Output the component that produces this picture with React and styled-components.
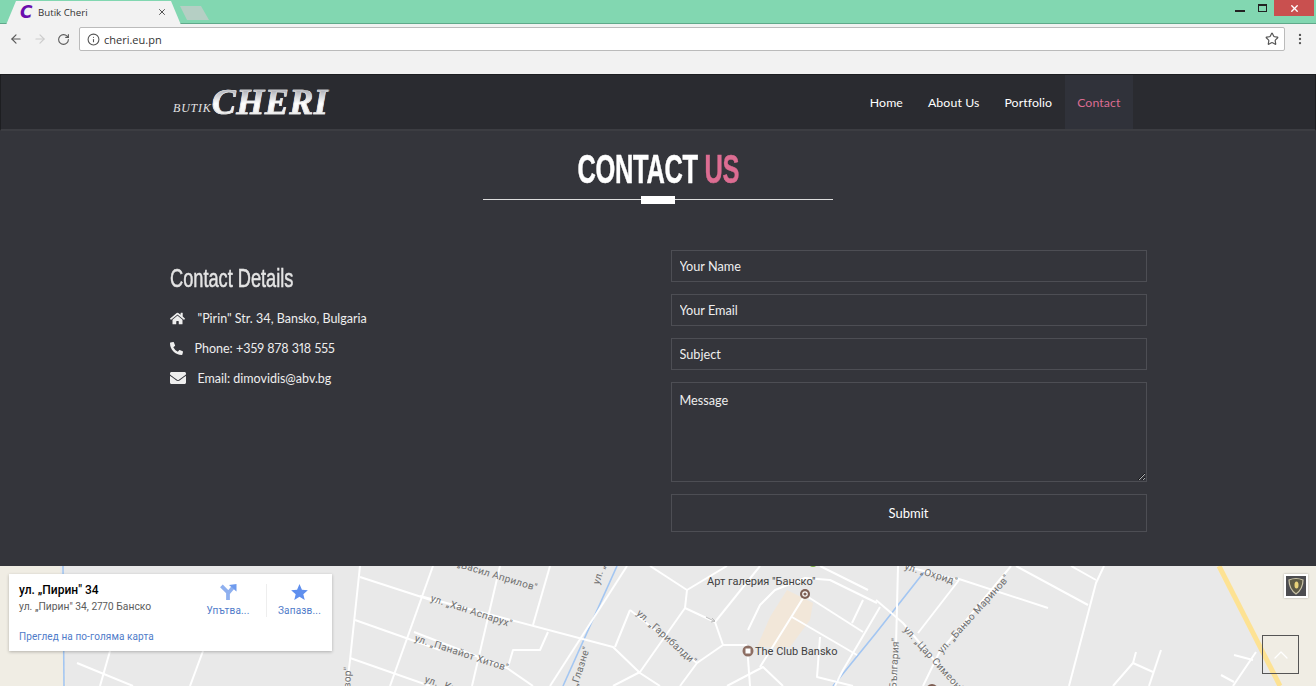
import React from "react";
import styled, { createGlobalStyle } from "styled-components";
import { ArrowLeft, ArrowRight, RotateCw, Info, Star, EllipsisVertical, X, ChevronUp } from "lucide-react";
import { FaHome, FaPhoneAlt, FaEnvelope } from "react-icons/fa";

const Global = createGlobalStyle`
  html, body { margin: 0; padding: 0; background: #34353b; height: 686px; overflow: hidden; }
  * { box-sizing: border-box; }
  body { font-family: Lato, "Open Sans", sans-serif; font-variant-numeric: proportional-nums; }
`;

const Page = styled.div`width: 1316px; height: 686px; position: relative; overflow: hidden;`;

const Chrome = styled.header`height: 74px; background: #f2f2f2; display: flex; flex-direction: column;`;
const TitleBar = styled.div`
  height: 24px; background: #82d7b1; border-bottom: 1px solid #5fa98a;
  display: flex; align-items: flex-start; padding-left: 6px;
`;
const Tab = styled.div`
  width: 175px; height: 24px; margin-top: 1px; background: #f2f2f2; flex: none;
  clip-path: polygon(0 100%, 10px 0, 165px 0, 175px 100%);
  display: flex; align-items: center; padding: 0 14px 2px 14px; gap: 5px;
`;
const Favicon = styled.span`
  font: italic bold 17px/20px "DejaVu Sans", sans-serif; color: #6a0dad; width: 13px;
`;
const TabTitle = styled.span`
  flex: 1; font: 9.7px "Open Sans", sans-serif; color: #333;
`;
const GhostTab = styled.div`
  width: 29px; height: 14px; margin: 6px 0 0 -1px; background: #b5cfc4; flex: none;
  clip-path: polygon(0 0, 21px 0, 29px 100%, 7px 100%);
`;
const WindowControls = styled.div`
  margin-left: auto; display: flex; align-items: flex-start; padding-right: 2px;
`;
const WinButton = styled.div`
  width: ${p => p.$w}px; height: 16px; display: flex; align-items: center; justify-content: center;
  background: ${p => p.$bg || "transparent"}; color: ${p => p.$bg ? "#fff" : "#222"};
`;
const MinGlyph = styled.i`display: block; width: 10px; height: 2px; margin: 6px 0 0 3px; background: #222;`;
const RestoreGlyph = styled.i`
  display: block; width: 9px; height: 8px; border: 1px solid #222; border-top-width: 2px;
  box-shadow: 1px -2px 0 -0px #82d7b1, 1px -2px 0 0 #222; margin-top: -1px;
`;
const Toolbar = styled.div`
  height: 26px; margin-top: 2px; display: flex; align-items: center; padding: 0 0 0 9px; color: #555;
`;
const NavIcon = styled.span`
  width: 24px; flex: none; display: flex; color: ${p => p.$off ? "#ccc" : "#5a5a5a"};
`;
const Omnibox = styled.div`
  width: 1206px; height: 24px; margin-left: -2px; background: #fff; border: 1px solid #bbb; border-radius: 2px;
  display: flex; align-items: center; padding: 0 5px 0 7px; gap: 4px; color: #555;
`;
const Url = styled.span`flex: 1; font: 11px "Open Sans", sans-serif; color: #333;`;
const MenuDots = styled.span`margin-left: 8px; display: flex; color: #555;`;

const NavBar = styled.nav`
  height: 57px; background: #2a2b30; border: 1px solid #1d1e21; border-bottom: 2px solid #3c3d42;
  display: flex; align-items: stretch; padding: 0 182px 0 172px;
`;
const Logo = styled.div`display: flex; align-items: flex-end; padding-bottom: 11px; color: #fff;`;
const LogoSmall = styled.span`
  font: italic 12px "Liberation Serif", serif; letter-spacing: .8px; margin-bottom: 2px; color: #e4e4e4;
`;
const LogoBig = styled.span`
  font: italic bold 36px/32px "Liberation Serif", serif; letter-spacing: .5px;
  display: inline-block; -webkit-text-stroke: .6px #e8e8e8;
  background: linear-gradient(#a9abb3 10%, #fff 55%, #e8e8e8); -webkit-background-clip: text; background-clip: text; color: transparent;
`;
const NavList = styled.ul`list-style: none; margin: 0 0 0 auto; padding: 0; display: flex;`;
const NavItem = styled.li`
  padding: 0 12.5px; display: flex; align-items: center; font-size: 12.3px; letter-spacing: .1px;
  color: ${p => p.$active ? "#dc6d92" : "#fff"}; background: ${p => p.$active ? "#30323a" : "transparent"};
`;

const Main = styled.main`height: 435px; background: #34353b; display: flex; flex-direction: column; align-items: center;`;
const Title = styled.h1`
  margin: 15px 0 0; font: bold 41px/47px "Liberation Sans", sans-serif; color: #fff; white-space: nowrap;
  transform: scaleX(.62); letter-spacing: -.5px; -webkit-text-stroke: .5px currentColor;
`;
const Accent = styled.span`color: #dc6d92;`;
const Rule = styled.div`
  width: 350px; height: 1px; background: #ddd; margin-top: 6px; display: flex; justify-content: center; align-items: center;
`;
const RuleBlock = styled.i`display: block; width: 34px; height: 8px; background: #fff; flex: none;`;
const Columns = styled.div`width: 977px; margin-top: 50px; display: flex; justify-content: space-between;`;
const Details = styled.section`padding-top: 13px;`;
const DetailsTitle = styled.h2`
  margin: 0 0 11px; font: normal 26px/30px "Liberation Sans", sans-serif; color: #e4e4e4; white-space: nowrap;
  transform: scaleX(.7); transform-origin: left center; -webkit-text-stroke: .5px currentColor;
`;
const DetailRow = styled.div`
  height: ${p => p.$h}px; display: flex; align-items: center; color: #eee; font-size: 12.5px; white-space: nowrap;
`;
const DetailIcon = styled.span`width: ${p => p.$w}px; flex: none; display: flex; color: #eee;`;
const Form = styled.form`width: 476px; display: flex; flex-direction: column; gap: 12px;`;
const FieldStyles = `
  width: 100%; background: transparent; border: 1px solid #4d4e54; padding: 0 8px; color: #eee;
  font: 12.7px Lato, sans-serif; outline: none;
  &::placeholder { color: #eee; opacity: 1; }
`;
const Input = styled.input`${FieldStyles} height: 32px;`;
const TextArea = styled.textarea`${FieldStyles} height: 100px; padding-top: 9px; display: block;`;
const Submit = styled.button`${FieldStyles} height: 38px; color: #fff; text-align: center; font-size: 13px;`;

const MapArea = styled.section`height: 120px; position: relative; background: #e9e9e9; overflow: hidden;`;
const MapSvg = styled.svg`display: block; width: 1316px; height: 120px;`;
const PlaceCard = styled.div`
  position: absolute; left: 9px; top: 8px; width: 323px; height: 77px; background: #fff;
  box-shadow: 0 1px 3px rgba(0,0,0,.25); padding: 9px 0 0 10px; font-family: Roboto, sans-serif;
  display: flex; flex-direction: column;
`;
const CardTop = styled.div`display: flex; height: 44px;`;
const CardInfo = styled.div`width: 171px; flex: none;`;
const PlaceName = styled.div`font-size: 12px; font-weight: 500; color: #000; line-height: 14px;`;
const PlaceAddr = styled.div`font-size: 10.3px; color: #5b5b5b; margin-top: 4px; white-space: nowrap; line-height: 12px;`;
const CardAction = styled.div`
  width: ${p => p.$w}px; flex: none; display: flex; flex-direction: column; align-items: center;
  color: #4f7bc9; font-size: 10px; line-height: 12px; gap: 5px; letter-spacing: .2px;
  border-left: ${p => p.$sep ? "1px solid #eee" : "none"}; height: 33px; margin-top: 1px;
`;
const CardLink = styled.div`margin-top: 4px; font-size: 10px; color: #4f7bc9; letter-spacing: .1px;`;
const GuyBox = styled.div`
  position: absolute; top: 8px; right: 8px; width: 24px; height: 24px; background: #fff;
  box-shadow: 0 0 2px rgba(0,0,0,.3); padding: 2px;
`;
const BackTop = styled.a`
  position: absolute; left: 1262px; top: 635px; width: 37px; height: 39px; border: 1px solid #555;
  display: flex; align-items: center; justify-content: center; color: #fff;
`;

const roads = [
  [[360,566],[350,660],[347,686]], [[360,577],[440,603]], [[355,620],[440,650]], [[350,658],[430,686]],
  [[433,566],[390,686]], [[203,651],[190,686]], [[110,651],[100,686]], [[77,663],[133,686]],
  [[420,596],[613,647],[640,673],[660,686]], [[550,566],[533,625]], [[500,566],[472,686]], [[627,566],[550,686]],
  [[548,632],[540,650],[513,650],[508,667]], [[414,632],[507,668],[533,686]], [[630,610],[615,647]], [[630,610],[697,663]],
  [[687,590],[650,566]], [[687,590],[727,566]], [[687,590],[685,608],[640,672],[613,686]],
  [[685,608],[715,622],[723,645]], [[723,645],[697,663],[680,686]], [[723,645],[747,645]], [[760,566],[715,622]],
  [[747,645],[750,686]], [[727,686],[763,667],[783,686]], [[748,630],[760,605],[775,590],[805,578],[830,580],[877,603]],
  [[805,595],[760,667]], [[805,595],[863,632]], [[792,617],[857,655]], [[820,637],[817,677],[853,686]],
  [[863,600],[852,623]], [[880,607],[843,670],[835,686]], [[898,566],[895,686]], [[876,600],[903,623],[956,686]],
  [[959,580],[918,633]], [[1011,566],[939,653],[923,686]], [[956,578],[1048,608]], [[1016,566],[1088,605]],
  [[1071,566],[1096,580]], [[1104,566],[1096,583],[1069,686]], [[1136,652],[1133,663],[1113,686]], [[1133,663],[1153,672]],
  [[1161,650],[1149,686]], [[1256,652],[1233,686]], [[1234,655],[1253,660]], [[1221,675],[1234,682]],
  [[905,566],[958,580]], [[820,566],[868,590]],
];
const water = [[[63,566],[64,686]], [[617,566],[563,686]], [[924,572],[876,633],[833,686]]];
const labels = [
  ['ул. „Васил Априлов"', 441, 562, 17], ['ул. „Хан Аспарух"', 430, 601, 18], ['ул. „Панайот Хитов"', 414, 641, 18],
  ['ул. „Кракра"', 424, 682, 18], ['ул. „Пирин"', 599, 585, -72], ['ул. „Гарибалди"', 636, 614, 42],
  ['ул. „Охрид"', 904, 569, 17], ['ул. „Баньо Маринов"', 942, 654, -48], ['ул. „Цар Симеон"', 903, 630, 48],
];
const endLabels = [['вор"', 351, 667, -88], ['ул. „Глазне"', 590, 648, -72], ['ул. „България"', 899, 638, -87]];

function MapDrawing() {
  const pts = r => r.map(p => p.join(",")).join(" ");
  return (
    <MapSvg viewBox="0 566 1316 120" fontFamily="Roboto, sans-serif">
      <polygon points="0,566 60,566 66,686 0,686" fill="#f0ede4" />
      <polygon points="1216,566 1316,566 1316,686 1278,686" fill="#f0ede4" />
      <polygon points="787,590 813,603 810,620 790,647 757,647 770,617" fill="#f2e7d9" />
      {water.map((r, i) => <polyline key={i} points={pts(r)} fill="none" stroke="#a3c6f2" strokeWidth="1.6" />)}
      {roads.map((r, i) => <polyline key={i} points={pts(r)} fill="none" stroke="#fff" strokeWidth="2" strokeLinejoin="round" />)}
      <line x1="1219" y1="566" x2="1280" y2="686" stroke="#fde293" strokeWidth="5" />
      <path d="M706 617l9 4.500M712 618l3 3-4 1" fill="none" stroke="#bbb" strokeWidth="1" />
      <circle cx="813" cy="563" r="4" fill="#7cb342" />
      {labels.map(([t, x, y, a]) => (
        <text key={t} x={x} y={y} fontSize="10" fill="#6f6f6f" letterSpacing=".3" transform={`rotate(${a} ${x} ${y})`}>{t}</text>
      ))}
      {endLabels.map(([t, x, y, a]) => (
        <text key={t} x={x} y={y} fontSize="10" fill="#6f6f6f" letterSpacing=".3" textAnchor="end" transform={`rotate(${a} ${x} ${y})`}>{t}</text>
      ))}
      <text x="707" y="585" fontSize="11" fill="#3f3f3f">Арт галерия "Банско"</text>
      <circle cx="805" cy="594" r="5" fill="#7d5e53" />
      <circle cx="805" cy="594" r="2.200" fill="none" stroke="#fff" strokeWidth="1.200" />
      <text x="755" y="655" fontSize="11" fill="#3f3f3f">The Club Bansko</text>
      <circle cx="748" cy="651" r="5.500" fill="#8d6e63" />
      <rect x="745.500" y="648.500" width="5" height="5" fill="#fff" />
      <circle cx="932" cy="690" r="6" fill="#7d5e53" />
    </MapSvg>
  );
}

export default function App() {
  return (
    <Page>
      <Global />
      <Chrome>
        <TitleBar>
          <Tab>
            <Favicon>C</Favicon>
            <TabTitle>Butik Cheri</TabTitle>
            <X size={10} color="#333" />
          </Tab>
          <GhostTab />
          <WindowControls>
            <WinButton $w={24}><MinGlyph /></WinButton>
            <WinButton $w={24}><RestoreGlyph /></WinButton>
            <WinButton $w={40} $bg="#c9504f"><X size={11} strokeWidth={3} /></WinButton>
          </WindowControls>
        </TitleBar>
        <Toolbar>
          <NavIcon><ArrowLeft size={14} /></NavIcon>
          <NavIcon $off><ArrowRight size={14} /></NavIcon>
          <NavIcon><RotateCw size={13} /></NavIcon>
          <Omnibox>
            <Info size={13} />
            <Url>cheri.eu.pn</Url>
            <Star size={14} />
          </Omnibox>
          <MenuDots><EllipsisVertical size={14} /></MenuDots>
        </Toolbar>
      </Chrome>

      <NavBar>
        <Logo>
          <LogoSmall>BUTIK</LogoSmall>
          <LogoBig>CHERI</LogoBig>
        </Logo>
        <NavList>
          <NavItem>Home</NavItem>
          <NavItem>About Us</NavItem>
          <NavItem>Portfolio</NavItem>
          <NavItem $active>Contact</NavItem>
        </NavList>
      </NavBar>

      <Main>
        <Title>CONTACT <Accent>US</Accent></Title>
        <Rule><RuleBlock /></Rule>
        <Columns>
          <Details>
            <DetailsTitle>Contact Details</DetailsTitle>
            <DetailRow $h={29}><DetailIcon $w={28}><FaHome size={15} /></DetailIcon>"Pirin" Str. 34, Bansko, Bulgaria</DetailRow>
            <DetailRow $h={30}><DetailIcon $w={25}><FaPhoneAlt size={13} /></DetailIcon>Phone: +359 878 318 555</DetailRow>
            <DetailRow $h={30}><DetailIcon $w={28}><FaEnvelope size={16} /></DetailIcon>Email: dimovidis@abv.bg</DetailRow>
          </Details>
          <Form>
            <Input placeholder="Your Name" />
            <Input placeholder="Your Email" />
            <Input placeholder="Subject" />
            <TextArea placeholder="Message" />
            <Submit type="button">Submit</Submit>
          </Form>
        </Columns>
      </Main>

      <MapArea>
        <MapDrawing />
        <PlaceCard>
          <CardTop>
            <CardInfo>
              <PlaceName>ул. „Пирин" 34</PlaceName>
              <PlaceAddr>ул. „Пирин" 34, 2770 Банско</PlaceAddr>
            </CardInfo>
            <CardAction $w={76}>
              <svg width="18" height="17" viewBox="0 0 18 17"><path d="M2 2l7 7v8M9 10l5-6" fill="none" stroke="#8fb0ef" strokeWidth="4" /><path d="M18 0v8L10 1z" fill="#6f9bee" /></svg>
              Упътва...
            </CardAction>
            <CardAction $w={66} $sep>
              <svg width="19" height="18" viewBox="0 0 24 23"><path d="M12 0l3.500 8.300 8.500.7-6.500 5.700 2 8.300L12 18.500 4.500 23l2-8.300L0 9l8.500-.7z" fill="#5f8fee" /></svg>
              Запазв...
            </CardAction>
          </CardTop>
          <CardLink>Преглед на по-голяма карта</CardLink>
        </PlaceCard>
        <GuyBox>
          <svg width="20" height="20" viewBox="0 0 20 20">
            <rect width="20" height="20" fill="#4c4c50" />
            <path d="M3 4q7-3 14 0q0 9-7 14q-7-5-7-14z" fill="#5d5a45" stroke="#c9c2a6" strokeWidth="1.200" />
            <ellipse cx="10.500" cy="9" rx="2" ry="3.500" fill="#e8d27a" />
          </svg>
        </GuyBox>
      </MapArea>

      <BackTop><ChevronUp size={24} strokeWidth={1.3} /></BackTop>
    </Page>
  );
}
